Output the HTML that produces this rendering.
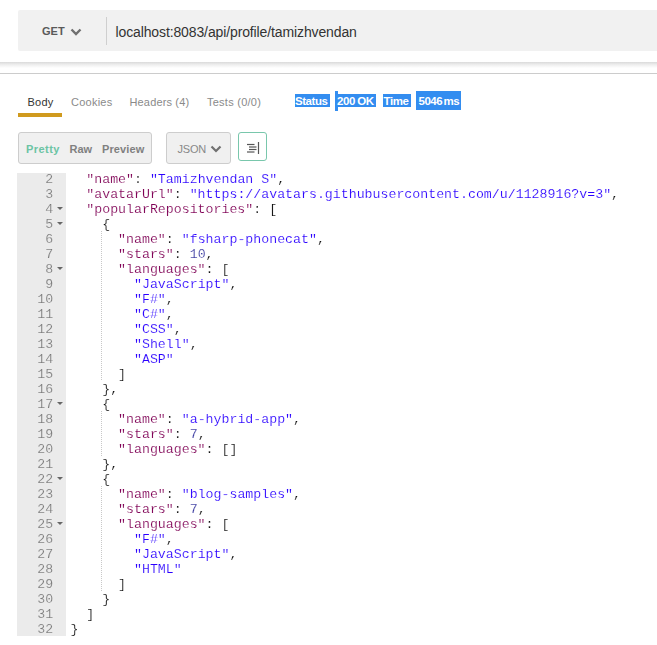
<!DOCTYPE html>
<html><head><meta charset="utf-8">
<style>
html,body{margin:0;padding:0;background:#fff;}
body{width:657px;height:645px;overflow:hidden;position:relative;font-family:"Liberation Sans",sans-serif;}
.abs{position:absolute;}
#urlbar{left:18px;top:10px;width:639px;height:41px;background:#f1f1f1;border-radius:2px 0 0 2px;}
#get{left:42px;top:24px;font-size:11px;font-weight:bold;color:#5a5a5a;line-height:14px;}
#div1{left:106px;top:17px;width:1px;height:28px;background:#cfcfcf;}
#url{left:115.5px;top:24px;font-size:14px;letter-spacing:-0.12px;color:#333;line-height:16px;white-space:nowrap;}
#shadow{left:0;top:62px;width:657px;height:6px;background:linear-gradient(#dadada,#ececec 40%,#fff);}
#hline{left:0;top:73px;width:657px;height:1px;background:#cccccc;}
.tab{top:95px;font-size:11px;letter-spacing:0.25px;line-height:14px;color:#8a8a8a;white-space:nowrap;}
#uline{left:18px;top:113px;width:44px;height:4px;background:#d09a1e;}
.hlb{background:#338df0;}
.hlt{top:95px;color:#fff;font-weight:bold;font-size:11.5px;line-height:13px;white-space:nowrap;}
#grp{left:18px;top:132px;width:132px;height:30px;border:1px solid #cdcdcd;border-radius:3px;background:#f0f0f0;}
.gb{top:142px;font-size:11px;font-weight:bold;line-height:14px;color:#808080;white-space:nowrap;}
#json{left:166px;top:132px;width:63px;height:30px;border:1px solid #cdcdcd;border-radius:3px;background:#f0f0f0;}
#wrap{left:238px;top:132px;width:27px;height:27px;border:1px solid #79c7ac;border-radius:3px;background:#fff;}
#gutter{left:17px;top:173px;width:49px;height:463px;background:#ebebeb;}
#code{left:0;top:172px;width:657px;will-change:transform;}
.ln{position:absolute;left:0;width:53.2px;-webkit-text-stroke:0.15px #ebebeb;text-align:right;font-family:"Liberation Mono",monospace;font-size:13.2px;line-height:15px;color:#7a7a7a;}
.cl{position:absolute;left:70.4px;-webkit-text-stroke:0.15px #fff;font-family:"Liberation Mono",monospace;font-size:13.25px;line-height:15px;color:#111;white-space:pre;}
.k{color:#7f0055;}
.s{color:#2a00ff;}
.n{color:#3a3aa0;}
.fold{position:absolute;left:56.6px;width:0;height:0;border-left:3px solid transparent;border-right:3px solid transparent;border-top:3.4px solid #666;}
.guide{position:absolute;left:101px;width:1px;background-image:linear-gradient(#c8c8c8 50%,transparent 50%);background-size:1px 2px;}
</style></head><body>
<div id="urlbar" class="abs"></div>
<div id="get" class="abs">GET</div>
<svg class="abs" style="left:70px;top:27px" width="12" height="10" viewBox="0 0 12 10"><polyline points="1.5,2.5 6,7 10.5,2.5" fill="none" stroke="#707070" stroke-width="2.4"/></svg>
<div id="div1" class="abs"></div>
<div id="url" class="abs">localhost:8083/api/profile/tamizhvendan</div>
<div id="shadow" class="abs"></div>
<div id="hline" class="abs"></div>

<div class="abs tab" style="left:27.5px;color:#333">Body</div>
<div class="abs tab" style="left:71px">Cookies</div>
<div class="abs tab" style="left:129.5px;letter-spacing:0.15px">Headers (4)</div>
<div class="abs tab" style="left:207px;letter-spacing:0.25px">Tests (0/0)</div>
<div id="uline" class="abs"></div>

<div class="abs hlb" style="left:295px;top:94px;width:35px;height:13px;"></div>
<div class="abs hlb" style="left:335px;top:91px;width:3px;height:20px;"></div>
<div class="abs hlb" style="left:338px;top:94px;width:38px;height:13px;"></div>
<div class="abs hlb" style="left:383px;top:94px;width:28px;height:13px;"></div>
<div class="abs hlb" style="left:416px;top:91px;width:45px;height:19px;"></div>
<div class="abs hlt" style="left:295px;letter-spacing:-0.45px">Status</div>
<div class="abs hlt" style="left:337px;letter-spacing:-0.45px;word-spacing:-0.4px">200 OK</div>
<div class="abs hlt" style="left:383.5px;letter-spacing:-0.4px">Time</div>
<div class="abs hlt" style="left:418.5px;letter-spacing:-0.5px;word-spacing:-1.2px">5046 ms</div>

<div id="grp" class="abs"></div>
<div class="abs gb" style="left:26px;color:#6cc4a4;letter-spacing:0.45px">Pretty</div>
<div class="abs gb" style="left:69.5px">Raw</div>
<div class="abs gb" style="left:102px;letter-spacing:0.1px">Preview</div>
<div id="json" class="abs"></div>
<div class="abs gb" style="left:177.5px;font-weight:normal;color:#888;letter-spacing:-0.2px">JSON</div>
<svg class="abs" style="left:210px;top:144px" width="12" height="10" viewBox="0 0 12 10"><polyline points="1.5,2.5 6,7 10.5,2.5" fill="none" stroke="#707070" stroke-width="2.2"/></svg>
<div id="wrap" class="abs"></div>
<svg class="abs" style="left:238px;top:132px" width="29" height="29" viewBox="0 0 29 29">
<g stroke="#555" stroke-width="1.2">
<line x1="9" y1="12.5" x2="16.5" y2="12.5"/>
<line x1="11" y1="15" x2="18.5" y2="15"/>
<line x1="11" y1="17.5" x2="18.5" y2="17.5"/>
<line x1="9" y1="20" x2="16.5" y2="20"/>
<line x1="20.5" y1="10" x2="20.5" y2="22"/>
</g></svg>

<div id="gutter" class="abs"></div>
<div id="code" class="abs">
<div class="ln" style="top:0px">2</div>
<div class="cl" style="top:0px">  <span class="k">"name"</span>: <span class="s">"Tamizhvendan S"</span>,</div>
<div class="ln" style="top:15px">3</div>
<div class="cl" style="top:15px">  <span class="k">"avatarUrl"</span>: <span class="s">"https://avatars.githubusercontent.com/u/1128916?v=3"</span>,</div>
<div class="ln" style="top:30px">4</div>
<div class="fold" style="top:35px"></div>
<div class="cl" style="top:30px">  <span class="k">"popularRepositories"</span>: [</div>
<div class="ln" style="top:45px">5</div>
<div class="fold" style="top:50px"></div>
<div class="cl" style="top:45px">    {</div>
<div class="ln" style="top:60px">6</div>
<div class="cl" style="top:60px">      <span class="k">"name"</span>: <span class="s">"fsharp-phonecat"</span>,</div>
<div class="ln" style="top:75px">7</div>
<div class="cl" style="top:75px">      <span class="k">"stars"</span>: <span class="n">10</span>,</div>
<div class="ln" style="top:90px">8</div>
<div class="fold" style="top:95px"></div>
<div class="cl" style="top:90px">      <span class="k">"languages"</span>: [</div>
<div class="ln" style="top:105px">9</div>
<div class="cl" style="top:105px">        <span class="s">"JavaScript"</span>,</div>
<div class="ln" style="top:120px">10</div>
<div class="cl" style="top:120px">        <span class="s">"F#"</span>,</div>
<div class="ln" style="top:135px">11</div>
<div class="cl" style="top:135px">        <span class="s">"C#"</span>,</div>
<div class="ln" style="top:150px">12</div>
<div class="cl" style="top:150px">        <span class="s">"CSS"</span>,</div>
<div class="ln" style="top:165px">13</div>
<div class="cl" style="top:165px">        <span class="s">"Shell"</span>,</div>
<div class="ln" style="top:180px">14</div>
<div class="cl" style="top:180px">        <span class="s">"ASP"</span></div>
<div class="ln" style="top:195px">15</div>
<div class="cl" style="top:195px">      ]</div>
<div class="ln" style="top:210px">16</div>
<div class="cl" style="top:210px">    },</div>
<div class="ln" style="top:225px">17</div>
<div class="fold" style="top:230px"></div>
<div class="cl" style="top:225px">    {</div>
<div class="ln" style="top:240px">18</div>
<div class="cl" style="top:240px">      <span class="k">"name"</span>: <span class="s">"a-hybrid-app"</span>,</div>
<div class="ln" style="top:255px">19</div>
<div class="cl" style="top:255px">      <span class="k">"stars"</span>: <span class="n">7</span>,</div>
<div class="ln" style="top:270px">20</div>
<div class="cl" style="top:270px">      <span class="k">"languages"</span>: []</div>
<div class="ln" style="top:285px">21</div>
<div class="cl" style="top:285px">    },</div>
<div class="ln" style="top:300px">22</div>
<div class="fold" style="top:305px"></div>
<div class="cl" style="top:300px">    {</div>
<div class="ln" style="top:315px">23</div>
<div class="cl" style="top:315px">      <span class="k">"name"</span>: <span class="s">"blog-samples"</span>,</div>
<div class="ln" style="top:330px">24</div>
<div class="cl" style="top:330px">      <span class="k">"stars"</span>: <span class="n">7</span>,</div>
<div class="ln" style="top:345px">25</div>
<div class="fold" style="top:350px"></div>
<div class="cl" style="top:345px">      <span class="k">"languages"</span>: [</div>
<div class="ln" style="top:360px">26</div>
<div class="cl" style="top:360px">        <span class="s">"F#"</span>,</div>
<div class="ln" style="top:375px">27</div>
<div class="cl" style="top:375px">        <span class="s">"JavaScript"</span>,</div>
<div class="ln" style="top:390px">28</div>
<div class="cl" style="top:390px">        <span class="s">"HTML"</span></div>
<div class="ln" style="top:405px">29</div>
<div class="cl" style="top:405px">      ]</div>
<div class="ln" style="top:420px">30</div>
<div class="cl" style="top:420px">    }</div>
<div class="ln" style="top:435px">31</div>
<div class="cl" style="top:435px">  ]</div>
<div class="ln" style="top:450px">32</div>
<div class="cl" style="top:450px">}</div>
<div class="guide" style="top:59px;height:150px"></div>
<div class="guide" style="top:239px;height:45px"></div>
<div class="guide" style="top:314px;height:105px"></div>
</div>
</body></html>
